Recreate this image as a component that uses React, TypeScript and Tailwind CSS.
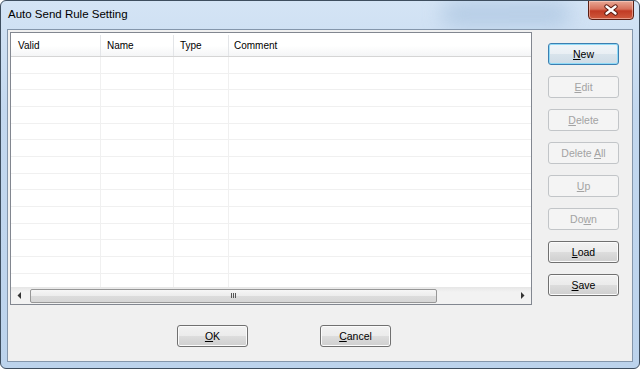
import React from "react";

type BtnProps = {
  pre?: string;
  u: string;
  post?: string;
  disabled?: boolean;
  def?: boolean;
};

function Btn({ pre = "", u, post = "", disabled, def }: BtnProps) {
  let cls =
    "w-[71px] h-[22px] shrink-0 rounded-[3px] border flex items-center justify-center text-[10.5px] leading-none ";
  if (disabled) {
    cls += "border-[#c2c5c8] bg-[#f4f4f4] text-[#a3a3a3]";
  } else if (def) {
    cls +=
      "border-[#3c7fb1] bg-[linear-gradient(#f0f5f9_0%,#e9eff4_50%,#d9e4ec_50%,#cfdce6_100%)] shadow-[inset_0_0_0_1px_#8fdaf7] text-black";
  } else {
    cls +=
      "border-[#707070] bg-[linear-gradient(#f2f2f2_0%,#ebebeb_50%,#dddddd_50%,#cfcfcf_100%)] shadow-[inset_0_0_0_1px_#fbfbfb] text-black";
  }
  return (
    <div className={cls}>
      <span>
        {pre}
        <span className="underline underline-offset-[1px]">{u}</span>
        {post}
      </span>
    </div>
  );
}

const rows = Array.from({ length: 14 });

export default function App() {
  return (
    <div className="w-[640px] h-[369px] font-['Liberation_Sans',Arial,sans-serif] bg-white">
      <div className="relative w-[640px] h-[369px] rounded-[6px] border border-[#3e4e5f] bg-[linear-gradient(180deg,#d4e4f5_0%,#c3d8ef_30%,#bcd3ec_100%)] flex flex-col overflow-hidden">
        {/* blurred glass patch */}
        <div className="absolute left-[440px] top-[0px] w-[130px] h-[26px] rounded-full bg-[#a9c3df] blur-[10px] opacity-70" />
        {/* title bar */}
        <div className="relative h-[28px] flex items-center pl-[7px] text-[11.5px] text-black">
          Auto Send Rule Setting
        </div>
        {/* close button */}
        <div className="absolute top-[-1px] right-[5px] w-[46px] h-[20px] rounded-b-[4px] border border-[#5a1f14] bg-[linear-gradient(180deg,#e9a895_0%,#d7705a_45%,#c13b24_55%,#cf5a3e_100%)] shadow-[inset_0_0_0_1px_rgba(255,220,210,0.5)] flex items-center justify-center">
          <svg width="16" height="12" viewBox="0 0 16 12">
            <path d="M3.5 2.5 L12.5 9.5 M12.5 2.5 L3.5 9.5" stroke="#5b1a10" strokeWidth="4.4" strokeLinecap="round" />
            <path d="M3.5 2.5 L12.5 9.5 M12.5 2.5 L3.5 9.5" stroke="#ffffff" strokeWidth="2.4" strokeLinecap="round" />
          </svg>
        </div>

        {/* client area */}
        <div className="relative mx-[6px] h-[333px] border border-[#8496ab] bg-[#f0f0f0] flex flex-col">
          <div className="flex">
            {/* list view */}
            <div className="ml-[2px] mt-[2px] w-[522px] h-[273px] border border-[#828790] bg-white flex flex-col overflow-hidden">
              {/* header */}
              <div className="h-[24px] shrink-0 flex border-b border-[#d5d5d5] bg-[linear-gradient(#ffffff_0%,#ffffff_55%,#f4f5f6_100%)] text-[10px] text-black pt-[2px]">
                <div className="w-[90px] border-r border-[#e3e5e8] flex items-center pl-[7px]">Valid</div>
                <div className="w-[73px] border-r border-[#e3e5e8] flex items-center pl-[6px]">Name</div>
                <div className="w-[55px] border-r border-[#e3e5e8] flex items-center pl-[6px]">Type</div>
                <div className="flex-1 flex items-center pl-[5px]">Comment</div>
              </div>
              {/* rows */}
              <div className="flex-1 overflow-hidden">
                {rows.map((_, i) => (
                  <div key={i} className="h-[16.67px] flex border-b border-[#f0f0f0]">
                    <div className="w-[90px] border-r border-[#f0f0f0]" />
                    <div className="w-[73px] border-r border-[#f0f0f0]" />
                    <div className="w-[55px] border-r border-[#f0f0f0]" />
                    <div className="flex-1" />
                  </div>
                ))}
              </div>
              {/* horizontal scrollbar */}
              <div className="h-[17px] shrink-0 flex items-center bg-[linear-gradient(#e6e6e6,#f2f2f2_30%,#f2f2f2)]">
                <div className="w-[17px] h-[17px] flex items-center justify-center">
                  <svg width="5" height="7" viewBox="0 0 5 7">
                    <path d="M4 0 L0.5 3.5 L4 7 Z" fill="#333" />
                  </svg>
                </div>
                <div className="ml-[2px] w-[407px] h-[14px] rounded-[2px] border border-[#979797] bg-[linear-gradient(#f6f6f6_0%,#ececec_50%,#dcdcdc_50%,#d6d6d6_100%)] flex items-center justify-center">
                  <div className="flex gap-[1px]">
                    <div className="w-[1px] h-[5px] bg-[#555]" />
                    <div className="w-[1px] h-[5px] bg-[#555]" />
                    <div className="w-[1px] h-[5px] bg-[#555]" />
                  </div>
                </div>
                <div className="flex-1" />
                <div className="w-[17px] h-[17px] flex items-center justify-center">
                  <svg width="5" height="7" viewBox="0 0 5 7">
                    <path d="M1 0 L4.5 3.5 L1 7 Z" fill="#333" />
                  </svg>
                </div>
              </div>
            </div>

            {/* right buttons */}
            <div className="ml-[16px] mt-[13px] flex flex-col gap-[11px]">
              <Btn u="N" post="ew" def />
              <Btn u="E" post="dit" disabled />
              <Btn u="D" post="elete" disabled />
              <Btn pre="Delete " u="A" post="ll" disabled />
              <Btn u="U" post="p" disabled />
              <Btn pre="Do" u="w" post="n" disabled />
              <Btn u="L" post="oad" />
              <Btn u="S" post="ave" />
            </div>
          </div>

          {/* bottom buttons */}
          <div className="mt-[20px] flex pl-[169px] gap-[72px]">
            <Btn u="O" post="K" />
            <Btn u="C" post="ancel" />
          </div>
        </div>
      </div>
    </div>
  );
}
